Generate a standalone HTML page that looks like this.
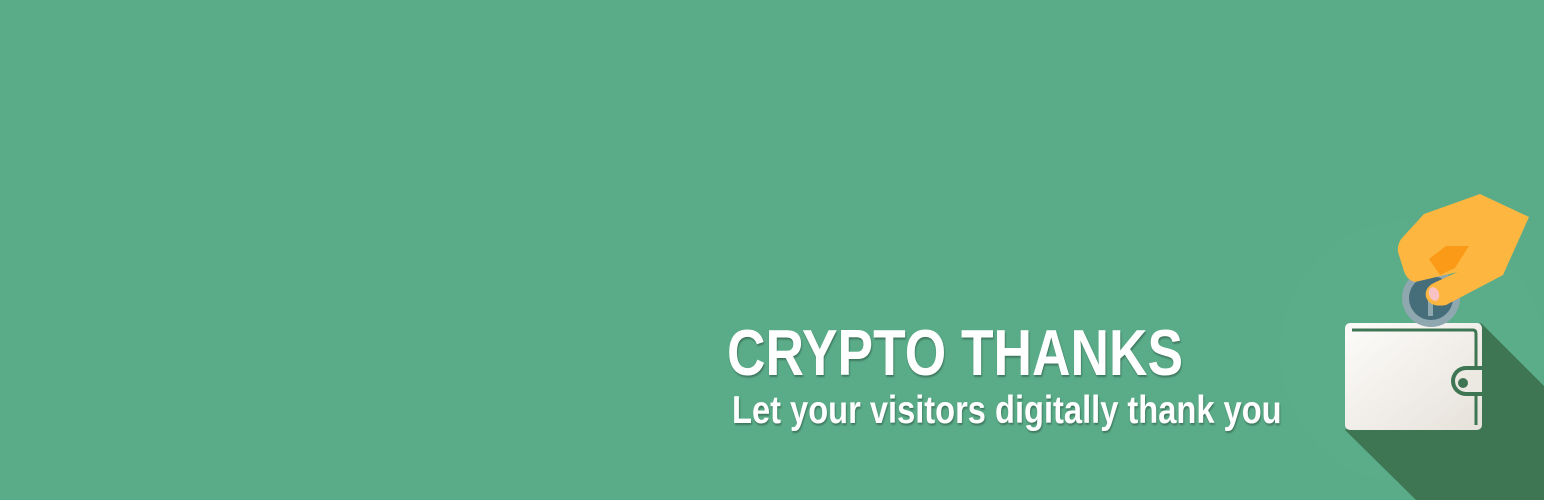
<!DOCTYPE html>
<html><head><style>
html,body{margin:0;padding:0}
body{width:1544px;height:500px;background:#5aac88;position:relative;overflow:hidden;font-family:"Liberation Sans",sans-serif}
.t{position:absolute;color:#fff;font-weight:bold;white-space:nowrap;transform-origin:0 0;text-shadow:1px 2px 2px rgba(0,0,0,.3)}
</style></head><body>
<svg width="1544" height="500" style="position:absolute;left:0;top:0">
<circle cx="1412" cy="352" r="132" fill="#5bad89"/>
<polygon points="1481,323 1544,386 1544,500 1416,500 1345,430" fill="#3e7654"/>
<defs><linearGradient id="g" x1="0" y1="0" x2="1" y2="1"><stop offset="0" stop-color="#fdfcfa"/><stop offset="1" stop-color="#e6e1da"/></linearGradient></defs>
<rect x="1345" y="323" width="137" height="107" rx="5" fill="url(#g)"/>
<path d="M1352 330 H1473 Q1476 330 1476 334 V425" stroke="#3e7654" stroke-width="3" fill="none"/>
<path d="M1482 366 H1466 A14 14 0 0 0 1466 396 H1482 Z" fill="#3e7654"/>
<path d="M1482 370 H1466 A10 10 0 0 0 1466 392 H1482 Z" fill="#ece8e2"/>
<circle cx="1463" cy="383" r="5" fill="#3e7654"/>
<circle cx="1431" cy="298" r="29" fill="#8fa7ae"/>
<circle cx="1431" cy="298" r="22" fill="#456e7a"/>
<rect x="1428" y="296" width="5" height="20" fill="#8fa7ae"/>
<path d="M1398 252 Q1397 244 1402 238 L1424 214 L1480 194 L1529 217 L1503 275 L1446 305 Q1430 308 1426 297 Q1424 287 1436 282 L1458 272 L1415 282 Q1406 280 1403 268 Z" fill="#fdb640"/>
<polygon points="1429,259 1446,246 1469,246 1455,268 1440,275" fill="#fb9a16"/>
<path d="M1436 282 L1462 270 L1440 300 Q1430 304 1427 297 Q1425 287 1436 282Z" fill="#fdb640"/>
<ellipse cx="1434" cy="294" rx="5" ry="7" fill="#f9c2c4" transform="rotate(-20 1434 294)"/>
</svg>
<div class="t" style="left:727px;top:315px;font-size:65px;transform:scaleX(0.82)">CRYPTO THANKS</div>
<div class="t" style="left:732px;top:389px;font-size:39px;transform:scaleX(0.837)">Let your visitors digitally thank you</div>
</body></html>
